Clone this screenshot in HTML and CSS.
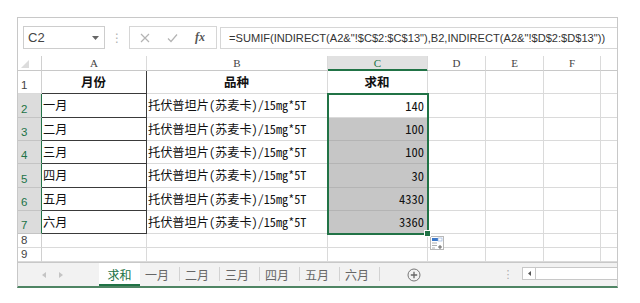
FILE: index.html
```html
<html>
<head>
  <meta charset="utf-8">
  <link rel="stylesheet" href="styles.css">
</head>
<body>

<div class="window">

  <!-- formula bar -->
  <div class="formulaBar">
    <div class="nameBox">
      <span>C2</span>
      <svg class="caret" width="7" height="4" viewBox="0 0 7 4"><polygon points="0,0 7,0 3.5,4" fill="#666"/></svg>
    </div>
    <div class="grip">⋮</div>
    <div class="fxButtons">
      <svg width="10" height="10" viewBox="0 0 10 10"><path d="M1 1 L9 9 M9 1 L1 9" stroke="#b4b4b4" stroke-width="1.2"/></svg>
      <svg width="11" height="10" viewBox="0 0 11 10"><path d="M1 5.5 L4 8.5 L10 1.5" stroke="#b4b4b4" stroke-width="1.2" fill="none"/></svg>
      <span class="fx">fx</span>
    </div>
    <div class="formulaInput">=SUMIF(INDIRECT(A2&amp;"!$C$2:$C$13"),B2,INDIRECT(A2&amp;"!$D$2:$D$13"))</div>
  </div>

  <!-- grid -->
  <div class="sheetWrap">
    <div class="sheet">
      <div class="corner"><svg width="8" height="8" viewBox="0 0 8 8"><polygon points="8,0 8,8 0,8" fill="#dcdcdc"/></svg></div>
      <div class="colHead">A</div>
      <div class="colHead">B</div>
      <div class="colHead active">C</div>
      <div class="colHead">D</div>
      <div class="colHead">E</div>
      <div class="colHead">F</div>
      <div class="colHead last"></div>

      <div class="rowHead">1</div>
      <div class="cell colA head">月份</div>
      <div class="cell head">品种</div>
      <div class="cell head">求和</div>
      <div class="cell"></div><div class="cell"></div><div class="cell"></div><div class="cell last"></div>

      <div class="rowHead sel">2</div>
      <div class="cell colA">一月</div>
      <div class="cell">托伏普坦片(苏麦卡)/15mg*5T</div>
      <div class="cell num">140</div>
      <div class="cell"></div><div class="cell"></div><div class="cell"></div><div class="cell last"></div>

      <div class="rowHead sel">3</div>
      <div class="cell colA">二月</div>
      <div class="cell">托伏普坦片(苏麦卡)/15mg*5T</div>
      <div class="cell num fill">100</div>
      <div class="cell"></div><div class="cell"></div><div class="cell"></div><div class="cell last"></div>

      <div class="rowHead sel">4</div>
      <div class="cell colA">三月</div>
      <div class="cell">托伏普坦片(苏麦卡)/15mg*5T</div>
      <div class="cell num fill">100</div>
      <div class="cell"></div><div class="cell"></div><div class="cell"></div><div class="cell last"></div>

      <div class="rowHead sel">5</div>
      <div class="cell colA">四月</div>
      <div class="cell">托伏普坦片(苏麦卡)/15mg*5T</div>
      <div class="cell num fill">30</div>
      <div class="cell"></div><div class="cell"></div><div class="cell"></div><div class="cell last"></div>

      <div class="rowHead sel">6</div>
      <div class="cell colA">五月</div>
      <div class="cell">托伏普坦片(苏麦卡)/15mg*5T</div>
      <div class="cell num fill">4330</div>
      <div class="cell"></div><div class="cell"></div><div class="cell"></div><div class="cell last"></div>

      <div class="rowHead sel">7</div>
      <div class="cell colA">六月</div>
      <div class="cell">托伏普坦片(苏麦卡)/15mg*5T</div>
      <div class="cell num fill">3360</div>
      <div class="cell"></div><div class="cell"></div><div class="cell"></div><div class="cell last"></div>

      <div class="rowHead small">8</div>
      <div class="cell"></div><div class="cell"></div><div class="cell"></div>
      <div class="cell"></div><div class="cell"></div><div class="cell"></div><div class="cell last"></div>

      <div class="rowHead small">9</div>
      <div class="cell"></div><div class="cell"></div><div class="cell"></div>
      <div class="cell"></div><div class="cell"></div><div class="cell"></div><div class="cell last"></div>
    </div>

    <!-- overlay layer: selection outline and quick analysis button -->
    <div class="sheet overlay">
      <div class="selection"><div class="fillHandle"></div></div>
      <div class="quickAnalysis">
        <svg width="14" height="14" viewBox="0 0 14 14">
          <rect x="0.5" y="0.5" width="13" height="13" fill="#fff" stroke="#b8b8b8"/>
          <rect x="2" y="2" width="6" height="3" fill="#3c78c8"/>
          <rect x="8" y="2" width="4" height="3" fill="#fff" stroke="#8aa8d8" stroke-width="0.6"/>
          <path d="M2 7 H7 M2 9.5 H7 M2 12 H5" stroke="#9a9a9a" stroke-width="0.8"/>
          <path d="M10 9 V13 M8 11 H12" stroke="#555" stroke-width="0.9"/>
        </svg>
      </div>
    </div>
  </div>

  <!-- sheet tabs -->
  <div class="tabBar">
    <div class="tabNav">
      <svg width="4" height="6" viewBox="0 0 4 6"><polygon points="4,0 4,6 0,3" fill="#c4c4c4"/></svg>
      <svg width="4" height="6" viewBox="0 0 4 6"><polygon points="0,0 0,6 4,3" fill="#c4c4c4"/></svg>
    </div>
    <div class="tab current">求和</div>
    <div class="tab">一月</div>
    <div class="tab">二月</div>
    <div class="tab">三月</div>
    <div class="tab">四月</div>
    <div class="tab">五月</div>
    <div class="tab">六月</div>
    <div class="addSheet">
      <svg width="14" height="14" viewBox="0 0 14 14">
        <circle cx="7" cy="7" r="6" fill="none" stroke="#777" stroke-width="1"/>
        <path d="M7 3.8 V10.2 M3.8 7 H10.2" stroke="#666" stroke-width="1.3"/>
      </svg>
    </div>
    <div class="tabSpacer"></div>
    <div class="splitDots">⋮</div>
    <div class="hScroll">
      <div class="scrollArrow">
        <svg width="3" height="5" viewBox="0 0 3 5"><polygon points="3,0 3,5 0,2.5" fill="#555"/></svg>
      </div>
    </div>
  </div>

</div>
</body>
</html>
```

FILE: styles.css
```css
body {margin:0;background:#fff;}

.window {margin:17px 0 0 17px;width:601px;border:1px solid #c8c8c8;border-bottom:2px solid #4f8564;box-sizing:border-box;background:#fff;}

/* formula bar */
.formulaBar {display:flex;height:38px;padding:8px 0 0 5px;box-sizing:border-box;align-items:flex-start;}
.nameBox {width:82px;height:23px;box-sizing:border-box;border:1px solid #cdcdcd;display:flex;align-items:center;justify-content:space-between;padding:0 5px 0 4px;font-family:"Liberation Sans",Arial,sans-serif;font-size:13px;color:#444;}
.grip {width:24px;height:23px;display:flex;align-items:center;justify-content:center;color:#b0b0b0;font-size:12px;font-family:"DejaVu Sans",sans-serif;}
.fxButtons {width:88px;height:23px;box-sizing:border-box;border:1px solid #d6d6d6;display:flex;align-items:center;padding-left:10px;gap:17px;}
.fx {font-family:"Liberation Serif",serif;font-style:italic;font-weight:bold;font-size:12px;color:#555;}
.formulaInput {flex:1;height:22px;margin:1px 0 0 3px;box-sizing:border-box;border:1px solid #d6d6d6;border-right:none;padding-left:8px;font-family:"Liberation Sans",Arial,sans-serif;font-size:11.1px;line-height:20px;color:#333;white-space:nowrap;overflow:hidden;}

/* sheet grid */
.sheetWrap {position:relative;}
.sheet {display:grid;grid-template-columns:24px 105px 181px 100px 58px 58px 57px 1fr;grid-template-rows:15px 23px 24px 23px 23px 24px 23px 23px 14px 14px;}
.sheet > div {box-sizing:border-box;}
.overlay {position:absolute;top:0;left:0;right:0;bottom:0;pointer-events:none;}
.corner {border-right:1px solid #d0d0d0;border-bottom:1px solid #c8c8c8;display:flex;align-items:flex-end;padding:0 0 2px 3px;}
.colHead {border-right:1px solid #dadada;border-bottom:1px solid #c8c8c8;font-family:"Liberation Serif",serif;font-size:11px;color:#444;display:flex;align-items:center;justify-content:center;line-height:14px;}
.colHead.active {background:#e1e1e1;color:#217346;border-bottom-color:#217346;box-shadow:inset 0 -1px #217346;}
.colHead.last {border-right:none;}
.rowHead {border-right:1px solid #d0d0d0;border-bottom:1px solid #dadada;font-family:"Liberation Sans",Arial,sans-serif;font-size:11.5px;color:#444;display:flex;align-items:flex-end;padding:0 0 1px 3px;line-height:13px;}
.rowHead.sel {background:#dcdcdc;color:#217346;border-right-color:#217346;border-bottom-color:#c4c4c4;}
.rowHead.small {align-items:center;padding-bottom:0;}

.cell {border-right:1px solid #dadada;border-bottom:1px solid #dadada;font-family:"Noto Sans Mono CJK SC","Liberation Mono","Noto Sans CJK SC",monospace;font-size:12.2px;color:#111;display:flex;align-items:center;padding:0 2px 1px 1px;white-space:nowrap;overflow:hidden;}
.cell.last {border-right:none;}
.cell.colA {border-right-color:#3a3a3a;border-bottom-color:#3a3a3a;}
.cell.head {justify-content:center;font-weight:bold;font-family:"Noto Sans CJK SC",sans-serif;font-size:12.5px;}
.cell.num {justify-content:flex-end;padding-right:3px;font-size:12.5px;}
.cell.fill {background:#c6c6c6;border-bottom-color:#b4b4b4;border-right-color:#b4b4b4;}

/* selection outline over C2:C7 */
.selection {grid-column:4;grid-row:3 / 9;margin:-1px;border:2px solid #217346;position:relative;}
.fillHandle {position:absolute;right:-4px;bottom:-4px;width:5px;height:5px;background:#217346;border:1px solid #fff;}
.quickAnalysis {grid-column:5;grid-row:9 / 11;margin:2px 0 0 2px;width:14px;height:14px;line-height:0;}

/* sheet tabs */
.tabBar {display:flex;height:24px;background:#f2f2f2;border-top:1px solid #c8c8c8;box-sizing:border-box;font-family:"Noto Sans CJK SC",sans-serif;font-size:12px;color:#666;}
.tabNav {width:81px;display:flex;align-items:center;padding-left:24px;gap:13px;box-sizing:border-box;}
.tab {width:40px;display:flex;align-items:center;justify-content:center;position:relative;padding-right:6px;box-sizing:border-box;}
.tab::after {content:"";position:absolute;right:0;top:4px;bottom:5px;border-right:1px solid #d2d2d2;}
.tab.current {width:41px;background:#fff;color:#217346;border-bottom:2px solid #217346;padding-right:0;padding-top:1px;}
.tab.current::after {display:none;}
.addSheet {margin-left:27px;display:flex;align-items:center;line-height:0;}
.tabSpacer {flex:1;}
.splitDots {width:14px;display:flex;align-items:center;justify-content:center;color:#aaa;font-family:"DejaVu Sans",sans-serif;font-size:11px;margin-right:7px;}
.hScroll {width:95px;height:13px;margin-top:4px;border:1px solid #c8c8c8;border-right:none;background:#fff;box-sizing:border-box;display:flex;}
.scrollArrow {width:12px;border-right:1px solid #c8c8c8;display:flex;align-items:center;justify-content:center;}
```
